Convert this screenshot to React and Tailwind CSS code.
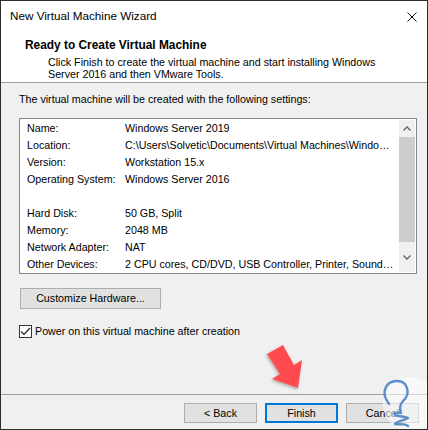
import React from "react";

const rows = [
  ["Name:", "Windows Server 2019"],
  ["Location:", "C:\\Users\\Solvetic\\Documents\\Virtual Machines\\Windo…"],
  ["Version:", "Workstation 15.x"],
  ["Operating System:", "Windows Server 2016"],
  ["", ""],
  ["Hard Disk:", "50 GB, Split"],
  ["Memory:", "2048 MB"],
  ["Network Adapter:", "NAT"],
  ["Other Devices:", "2 CPU cores, CD/DVD, USB Controller, Printer, Sound…"],
];

export default function App() {
  return (
    <div className="relative w-[428px] h-[430px] overflow-hidden border border-[#2d2d2d] bg-[#f0f0f0] font-['Liberation_Sans',Arial,sans-serif] text-black flex flex-col">
      {/* Title bar */}
      <div className="h-[30px] shrink-0 bg-white flex items-center justify-between pl-[9px] pr-[10px] text-[11.7px]">
        <span>New Virtual Machine Wizard</span>
        <svg width="10" height="10" viewBox="0 0 10 10" className="mt-[1px]">
          <path d="M0.5 0.5 L9.5 9.5 M9.5 0.5 L0.5 9.5" stroke="#111" strokeWidth="1" />
        </svg>
      </div>

      {/* Header */}
      <div className="h-[52px] shrink-0 bg-white border-b border-[#a0a0a0] pt-[7px] pl-[24px]">
        <div className="text-[11.9px] font-bold leading-[14px]">Ready to Create Virtual Machine</div>
        <div className="pl-[23px] mt-[4px] text-[10.7px] leading-[12px]">
          Click Finish to create the virtual machine and start installing Windows
          <br />
          Server 2016 and then VMware Tools.
        </div>
      </div>

      {/* Body */}
      <div className="flex-1 pl-[18px] pt-[9px] text-[10.7px]">
        <div className="leading-[14px]">The virtual machine will be created with the following settings:</div>
        <div className="mt-[12px] w-[398px] h-[156px] border border-[#828790] bg-white flex">
          <div className="flex-1 pl-[7px] pt-[1px] overflow-hidden">
            {rows.map(([l, v], i) => (
              <div key={i} className="h-[17px] flex items-center whitespace-nowrap">
                <span className="w-[98px] shrink-0">{l}</span>
                <span className="overflow-hidden">{v}</span>
              </div>
            ))}
          </div>
          <div className="w-[16px] my-[1px] mr-[1px] bg-[#f0f0f0] flex flex-col">
            <div className="h-[17px] flex items-center justify-center">
              <svg width="8" height="5" viewBox="0 0 8 5">
                <path d="M0.5 4.5 L4 1 L7.5 4.5" fill="none" stroke="#606060" strokeWidth="1.3" />
              </svg>
            </div>
            <div className="h-[105px] bg-[#cdcdcd]" />
            <div className="flex-1 flex items-center justify-center">
              <svg width="8" height="5" viewBox="0 0 8 5">
                <path d="M0.5 0.5 L4 4 L7.5 0.5" fill="none" stroke="#606060" strokeWidth="1.3" />
              </svg>
            </div>
          </div>
        </div>

        <div className="mt-[14px] ml-[1px] w-[141px] h-[21px] border border-[#adadad] bg-[#e1e1e1] flex items-center justify-center">
          Customize Hardware...
        </div>

        <div className="mt-[14px] flex items-center">
          <div className="w-[13px] h-[13px] border border-[#333] bg-white flex items-center justify-center">
            <svg width="11" height="9" viewBox="0 0 11 9">
              <path d="M1 4.5 L4 7.5 L10 1" fill="none" stroke="#222" strokeWidth="1.2" />
            </svg>
          </div>
          <span className="ml-[3px]">Power on this virtual machine after creation</span>
        </div>
      </div>

      {/* Footer */}
      <div className="h-[35px] shrink-0 border-t border-[#a0a0a0] pt-[8px] pr-[8px] flex justify-end gap-[8px] text-[10.7px]">
        <div className="w-[73px] h-[20px] border border-[#adadad] bg-[#e1e1e1] flex items-center justify-center">&lt; Back</div>
        <div className="w-[73px] h-[20px] border-2 border-[#0078d7] bg-[#e1e1e1] flex items-center justify-center">Finish</div>
        <div className="w-[73px] h-[20px] border border-[#adadad] bg-[#e1e1e1] flex items-center justify-center">Cancel</div>
      </div>

      {/* Overlay: red arrow and logo */}
      <svg className="absolute left-[-1px] top-[-1px] pointer-events-none" width="428" height="430" viewBox="0 0 428 430">
        <defs>
          <filter id="sh" x="-50%" y="-50%" width="200%" height="200%">
            <feDropShadow dx="-1" dy="1.5" stdDeviation="1.5" floodColor="#000" floodOpacity="0.3" />
          </filter>
        </defs>
        <polygon
          points="267,354 283,345 294,365 302,360 298,388 272,379 280,374"
          fill="#ff4b4f"
          filter="url(#sh)"
        />
        <circle cx="410" cy="404" r="27" fill="#ffffff" fillOpacity="0.55" />
        <path
          d="M389,404 C380,392 386,381 397,381 C408,381 411,394 403,401 C399,405 400,409 401,413 C396,412 393,413 395,415 C399,417 405,416 408,418 C403,421 397,421 395,424 C400,425 404,423 408,426"
          fill="none"
          stroke="#5a8fca"
          strokeWidth="2.4"
          strokeLinecap="round"
          strokeLinejoin="round"
        />
      </svg>
    </div>
  );
}
